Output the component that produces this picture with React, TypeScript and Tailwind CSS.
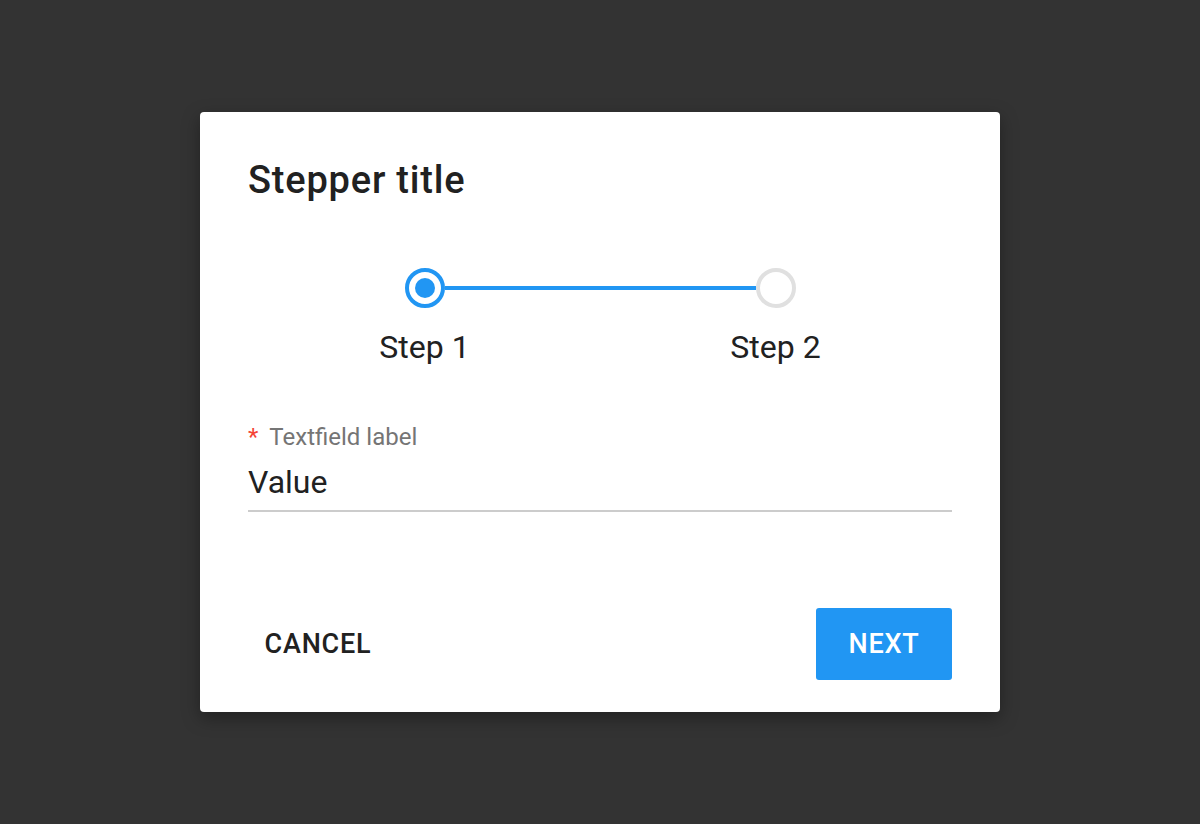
import React from 'react';

function StepDot({ active, label }: { active: boolean; label: string }) {
  return (
    <div className="flex w-[40px] shrink-0 flex-col items-center">
      <div
        className={
          active
            ? 'flex h-[40px] w-[40px] items-center justify-center rounded-full border-[4px] border-[#2196f3] bg-white'
            : 'flex h-[40px] w-[40px] items-center justify-center rounded-full border-[4px] border-[#e0e0e0] bg-white'
        }
      >
        {active && <div className="h-[20px] w-[20px] rounded-full bg-[#2196f3]" />}
      </div>
      <div className="mt-[19px] whitespace-nowrap text-[32px] leading-[40px] text-[#212121]">{label}</div>
    </div>
  );
}

export default function App() {
  return (
    <div
      className="flex h-[824px] w-[1200px] items-center justify-center bg-[#333333]"
      style={{ fontFamily: 'Roboto, "Liberation Sans", sans-serif' }}
    >
      <div className="flex h-[600px] w-[800px] flex-col rounded-[4px] bg-white px-12 pb-8 pt-[44px] shadow-[0_6px_18px_rgba(0,0,0,0.35)]">
        <h1 className="text-[38px] font-medium leading-[48px] tracking-[0.8px] text-[#212121]">Stepper title</h1>

        <div className="mt-[64px] flex justify-center">
          <div className="flex w-[391px] items-start">
            <StepDot active label="Step 1" />
            <div className="mt-[18px] h-[4px] flex-1 bg-[#2196f3]" />
            <StepDot active={false} label="Step 2" />
          </div>
        </div>

        <div className="mt-[56px] flex flex-col">
          <div className="flex items-baseline text-[24px] leading-[28px]">
            <span className="text-[#f44336]">*</span>
            <span className="ml-[11px] text-[#757575]">Textfield label</span>
          </div>
          <div className="mt-[11px] text-[32px] leading-[40px] text-[#212121]">Value</div>
          <div className="mt-[8px] h-[2px] bg-[#cccccc]" />
        </div>

        <div className="mt-auto flex items-center justify-between">
          <button
            type="button"
            className="flex h-[72px] w-[136px] items-center justify-center rounded-[3px] pl-[4px] text-[27px] font-medium tracking-[0.8px] text-[#212121]"
          >
            CANCEL
          </button>
          <button
            type="button"
            className="flex h-[72px] w-[136px] items-center justify-center rounded-[3px] bg-[#2196f3] text-[27px] font-medium tracking-[0.8px] text-white"
          >
            NEXT
          </button>
        </div>
      </div>
    </div>
  );
}
